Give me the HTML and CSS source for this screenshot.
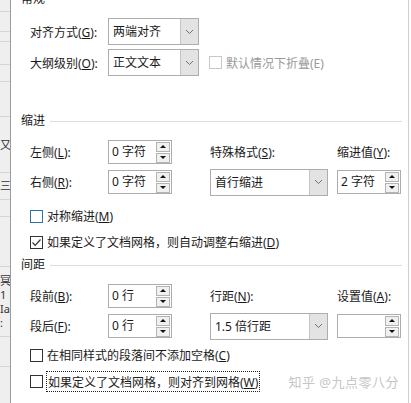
FILE: index.html
```html
<!DOCTYPE html>
<html lang="zh-CN">
<head>
    <meta charset="UTF-8">
    <meta name="viewport" content="width=device-width, initial-scale=1.0">
    <title>段落</title>
    <link rel="stylesheet" href="styles.css">
</head>
<body>
    <div class="screen">
        <div class="doc-strip">
            <div class="h12"></div>
            <div class="h20"></div>
            <div class="h10"></div>
            <div class="h23"></div>
            <div class="h17"></div>
            <div class="h35"></div>
            <div class="h56 doc-text">又</div>
            <div class="h27 doc-text">三</div>
            <div class="h17"></div>
            <div class="h50"></div>
            <div class="h70 doc-text">
                <span>冥</span>
                <span>1</span>
                <span>Ia</span>
                <span>:</span>
            </div>
            <div class="h30"></div>
        </div>

        <div class="dialog">
            <div class="content">
                <div class="group-title"><span>常规</span><span class="rule"></span></div>
                <div class="general rows">
                    <span class="label">对齐方式(<u>G</u>):</span>
                    <div class="select select-small"><span class="value">两端对齐</span><span class="arrow"><svg width="9" height="6" viewBox="0 0 9 6"><polyline points="1,1 4.5,4.5 8,1" fill="none" stroke="#707070" stroke-width="1"/></svg></span></div>
                    <span></span>

                    <span class="label">大纲级别(<u>O</u>):</span>
                    <div class="select select-small"><span class="value">正文文本</span><span class="arrow"><svg width="9" height="6" viewBox="0 0 9 6"><polyline points="1,1 4.5,4.5 8,1" fill="none" stroke="#707070" stroke-width="1"/></svg></span></div>
                    <label class="check disabled collapse"><span class="box"></span><span>默认情况下折叠(E)</span></label>
                </div>

                <div class="group-title section-gap"><span>缩进</span><span class="rule"></span></div>
                <div class="grid4 rows">
                    <span class="label">左侧(<u>L</u>):</span>
                    <div class="spin"><span class="value">0 字符</span><span class="spin-btns"><span class="btn"><i class="up"></i></span><span class="btn"><i class="down"></i></span></span></div>
                    <span class="label">特殊格式(<u>S</u>):</span>
                    <span class="label">缩进值(<u>Y</u>):</span>

                    <span class="label">右侧(<u>R</u>):</span>
                    <div class="spin"><span class="value">0 字符</span><span class="spin-btns"><span class="btn"><i class="up"></i></span><span class="btn"><i class="down"></i></span></span></div>
                    <div class="select select-wide"><span class="value">首行缩进</span><span class="arrow"><svg width="9" height="6" viewBox="0 0 9 6"><polyline points="1,1 4.5,4.5 8,1" fill="none" stroke="#707070" stroke-width="1"/></svg></span></div>
                    <div class="spin"><span class="value">2 字符</span><span class="spin-btns"><span class="btn"><i class="up"></i></span><span class="btn"><i class="down"></i></span></span></div>
                </div>

                <div class="checks rows indent-checks">
                    <label class="check hover"><span class="box"></span><span>对称缩进(<u>M</u>)</span></label>
                    <label class="check"><span class="box"><svg width="11" height="11" viewBox="0 0 11 11"><polyline points="1.5,5.5 4.2,8.3 9.5,2.5" fill="none" stroke="#333" stroke-width="1.2"/></svg></span><span>如果定义了文档网格，则自动调整右缩进(<u>D</u>)</span></label>
                </div>

                <div class="group-title spacing-title"><span>间距</span><span class="rule"></span></div>
                <div class="grid4 rows">
                    <span class="label">段前(<u>B</u>):</span>
                    <div class="spin"><span class="value">0 行</span><span class="spin-btns"><span class="btn"><i class="up"></i></span><span class="btn"><i class="down"></i></span></span></div>
                    <span class="label">行距(<u>N</u>):</span>
                    <span class="label">设置值(<u>A</u>):</span>

                    <span class="label">段后(<u>F</u>):</span>
                    <div class="spin"><span class="value">0 行</span><span class="spin-btns"><span class="btn"><i class="up"></i></span><span class="btn"><i class="down"></i></span></span></div>
                    <div class="select select-wide"><span class="value">1.5 倍行距</span><span class="arrow"><svg width="9" height="6" viewBox="0 0 9 6"><polyline points="1,1 4.5,4.5 8,1" fill="none" stroke="#707070" stroke-width="1"/></svg></span></div>
                    <div class="spin"><span class="value"></span><span class="spin-btns"><span class="btn"><i class="up"></i></span><span class="btn"><i class="down"></i></span></span></div>
                </div>

                <div class="checks rows spacing-checks">
                    <label class="check"><span class="box"></span><span>在相同样式的段落间不添加空格(<u>C</u>)</span></label>
                    <label class="check"><span class="box"></span><span class="focus">如果定义了文档网格，则对齐到网格(<u>W</u>)</span></label>
                </div>
            </div>
        </div>

        <div class="watermark">知乎 @九点零八分</div>
    </div>
</body>
</html>
```

FILE: styles.css
```css
body {
    margin: 0;
    font-family: "Noto Sans", "Noto Sans CJK SC", sans-serif;
    font-size: 12px;
    color: #1a1a1a;
    background: #fff;
}

.screen {
    position: relative;
    display: flex;
    width: 411px;
    height: 403px;
    overflow: hidden;
    background: #fff;
}

/* document visible behind the dialog */
.doc-strip {
    width: 10px;
    flex: none;
    display: flex;
    flex-direction: column;
    background: #efefef;
    border-right: 1px solid #9c9c9c;
    overflow: hidden;
}

.doc-strip div {
    flex: none;
    box-sizing: border-box;
    border-bottom: 1px solid #d4d4d4;
    overflow: hidden;
}

.doc-text {
    display: flex;
    flex-direction: column;
    justify-content: center;
    font-size: 11px;
    line-height: 14px;
    color: #333;
    white-space: nowrap;
}

.h10 { height: 10px; }
.h12 { height: 12px; }
.h17 { height: 17px; }
.h20 { height: 20px; }
.h23 { height: 23px; }
.h27 { height: 27px; }
.h30 { height: 30px; }
.h35 { height: 35px; }
.h50 { height: 50px; }
.h56 { height: 56px; }
.h70 { height: 70px; }

.dialog {
    width: 397px;
    flex: none;
    background: #fff;
    border-right: 1px solid #cfcfcf;
}

.content {
    margin-top: -9px;
    padding: 0 6px 0 10px;
}

.group-title {
    display: flex;
    align-items: center;
    height: 16px;
    line-height: 16px;
}

.group-title .rule {
    flex: 1;
    height: 1px;
    margin-left: 5px;
    background: #dcdcdc;
}

.section-gap {
    margin-top: 35px;
}

.spacing-title {
    margin-top: 2px;
}

.rows {
    padding-left: 9px;
}

.label {
    white-space: nowrap;
}

.general {
    display: grid;
    grid-template-columns: 78px 91px auto;
    grid-template-rows: 31px 31px;
    align-items: center;
    margin-top: 9px;
}

.grid4 {
    display: grid;
    grid-template-columns: 78px 102px 127px 64px;
    grid-template-rows: 30px 30px;
    align-items: center;
    margin-top: 8px;
}

/* drop-down box */
.select {
    display: flex;
    box-sizing: border-box;
    height: 27px;
    border: 1px solid #adadad;
    background: #fff;
}

.select-small {
    width: 91px;
}

.select-wide {
    width: 118px;
}

.select .value {
    flex: 1;
    padding-left: 4px;
    line-height: 25px;
    white-space: nowrap;
}

.select .arrow {
    width: 17px;
    display: flex;
    align-items: center;
    justify-content: center;
    background: #e3e3e3;
    border-left: 1px solid #c4c4c4;
}

/* spinner box */
.spin {
    display: flex;
    align-items: center;
    box-sizing: border-box;
    width: 64px;
    height: 24px;
    border: 1px solid #adadad;
    background: #fff;
}

.spin .value {
    flex: 1;
    padding-left: 3px;
    line-height: 22px;
    white-space: nowrap;
}

.spin-btns {
    display: flex;
    flex-direction: column;
    gap: 1px;
    margin-right: 1px;
}

.spin-btns .btn {
    box-sizing: border-box;
    width: 14px;
    height: 10px;
    display: flex;
    align-items: center;
    justify-content: center;
    border: 1px solid #b4b4b4;
    background: #f0f0f0;
}

.spin-btns .up {
    border-left: 3px solid transparent;
    border-right: 3px solid transparent;
    border-bottom: 3px solid #111;
}

.spin-btns .down {
    border-left: 3px solid transparent;
    border-right: 3px solid transparent;
    border-top: 3px solid #111;
}

/* check boxes */
.checks {
    display: grid;
    grid-template-rows: 26px 26px;
    align-items: center;
}

.indent-checks {
    margin-top: 6px;
}

.spacing-checks {
    margin-top: 1px;
}

.check {
    display: flex;
    align-items: center;
    gap: 4px;
    white-space: nowrap;
}

.check .box {
    box-sizing: border-box;
    width: 13px;
    height: 13px;
    display: flex;
    align-items: center;
    justify-content: center;
    border: 1px solid #333;
    background: #fff;
}

.check.hover .box {
    border-color: #2f72a8;
}

.check.disabled {
    color: #9a9a9a;
}

.check.disabled .box {
    border-color: #c8c8c8;
}

.collapse {
    margin-left: 10px;
}

.focus {
    padding: 1px 1px 0;
    outline: 1px dotted #222;
    outline-offset: 0;
}

.watermark {
    position: absolute;
    right: 12px;
    top: 373px;
    font-size: 13px;
    line-height: 18px;
    color: #c6c6c6;
    letter-spacing: 0.5px;
}
```
